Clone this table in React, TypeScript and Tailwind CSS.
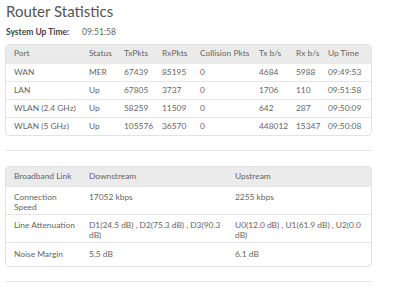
import React from "react";

const ports = [
  ["WAN", "MER", "67439", "85195", "0", "4684", "5988", "09:49:53"],
  ["LAN", "Up", "67805", "3737", "0", "1706", "110", "09:51:58"],
  ["WLAN (2.4 GHz)", "Up", "58259", "11509", "0", "642", "287", "09:50:09"],
  ["WLAN (5 GHz)", "Up", "105576", "36570", "0", "448012", "15347", "09:50:08"],
];

const portCols = [83, 35, 38, 38, 59, 37, 32, 45];
const portHead = ["Port", "Status", "TxPkts", "RxPkts", "Collision Pkts", "Tx b/s", "Rx b/s", "Up Time"];

const links = [
  ["Connection Speed", "17052 kbps", "2255 kbps"],
  ["Line Attenuation", "D1(24.5 dB) , D2(75.3 dB) , D3(90.3 dB)", "U0(12.0 dB) , U1(61.9 dB) , U2(0.0 dB)"],
  ["Noise Margin", "5.5 dB", "6.1 dB"],
];

export default function App() {
  return (
    <div
      className="w-[400px] h-[293px] overflow-hidden bg-white pl-[5px] text-[#666]"
      style={{ fontFamily: "Lato, 'Open Sans', sans-serif" }}
    >
      <h1 className="pl-px pt-px text-[15px] leading-[20px] text-[#555]">Router Statistics</h1>
      <div className="mt-[4px] flex h-[14px] items-center pl-px text-[8.5px]">
        <span className="w-[76px] font-bold text-[#444]">System Up Time:</span>
        <span>09:51:58</span>
      </div>

      <div className="mt-[5px] w-[367px] overflow-hidden rounded-[4px] border border-[#e2e2e2]">
        <table className="w-full table-fixed border-collapse text-[8.4px]">
          <colgroup>
            {portCols.map((w, i) => (
              <col key={i} style={{ width: w }} />
            ))}
          </colgroup>
          <thead>
            <tr className="h-[18px] bg-[#ebebeb]">
              {portHead.map((h, i) => (
                <th key={h} className={`text-left font-normal whitespace-nowrap ${i === 0 ? "pl-[8px]" : ""}`}>
                  {h}
                </th>
              ))}
            </tr>
          </thead>
          <tbody>
            {ports.map((row) => (
              <tr key={row[0]} className="border-t border-[#e6e6e6]">
                {row.map((c, i) => (
                  <td key={i} className={`h-[18px] whitespace-nowrap ${i === 0 ? "pl-[8px]" : ""}`}>
                    {c}
                  </td>
                ))}
              </tr>
            ))}
          </tbody>
        </table>
      </div>

      <div className="mt-[14px] h-px w-[367px] bg-[#e6e6e6]" />

      <div className="mt-[15px] w-[367px] overflow-hidden rounded-[4px] border border-[#e2e2e2]">
        <table className="w-full table-fixed border-collapse text-[8.4px] leading-[10px]">
          <colgroup>
            <col style={{ width: 83 }} />
            <col style={{ width: 146 }} />
            <col style={{ width: 138 }} />
          </colgroup>
          <thead>
            <tr className="bg-[#ebebeb]">
              <th className="h-[19px] pl-[8px] text-left font-normal">Broadband Link</th>
              <th className="h-[19px] text-left font-normal">Downstream</th>
              <th className="h-[19px] text-left font-normal">Upstream</th>
            </tr>
          </thead>
          <tbody>
            {links.map((row) => {
              const single = row[0] === "Noise Margin";
              return (
                <tr key={row[0]} className="border-t border-[#e6e6e6]">
                  {row.map((c, i) => (
                    <td
                      key={i}
                      className={`align-top pr-[8px] ${i === 0 ? "pl-[8px]" : ""} ${
                        single ? "h-[23px] pt-[6px] pb-[7px]" : "h-[27px] pt-[5px] pb-[2px]"
                      }`}
                    >
                      {c}
                    </td>
                  ))}
                </tr>
              );
            })}
          </tbody>
        </table>
      </div>

      <div className="mt-[14px] h-px w-[367px] bg-[#e6e6e6]" />
    </div>
  );
}
